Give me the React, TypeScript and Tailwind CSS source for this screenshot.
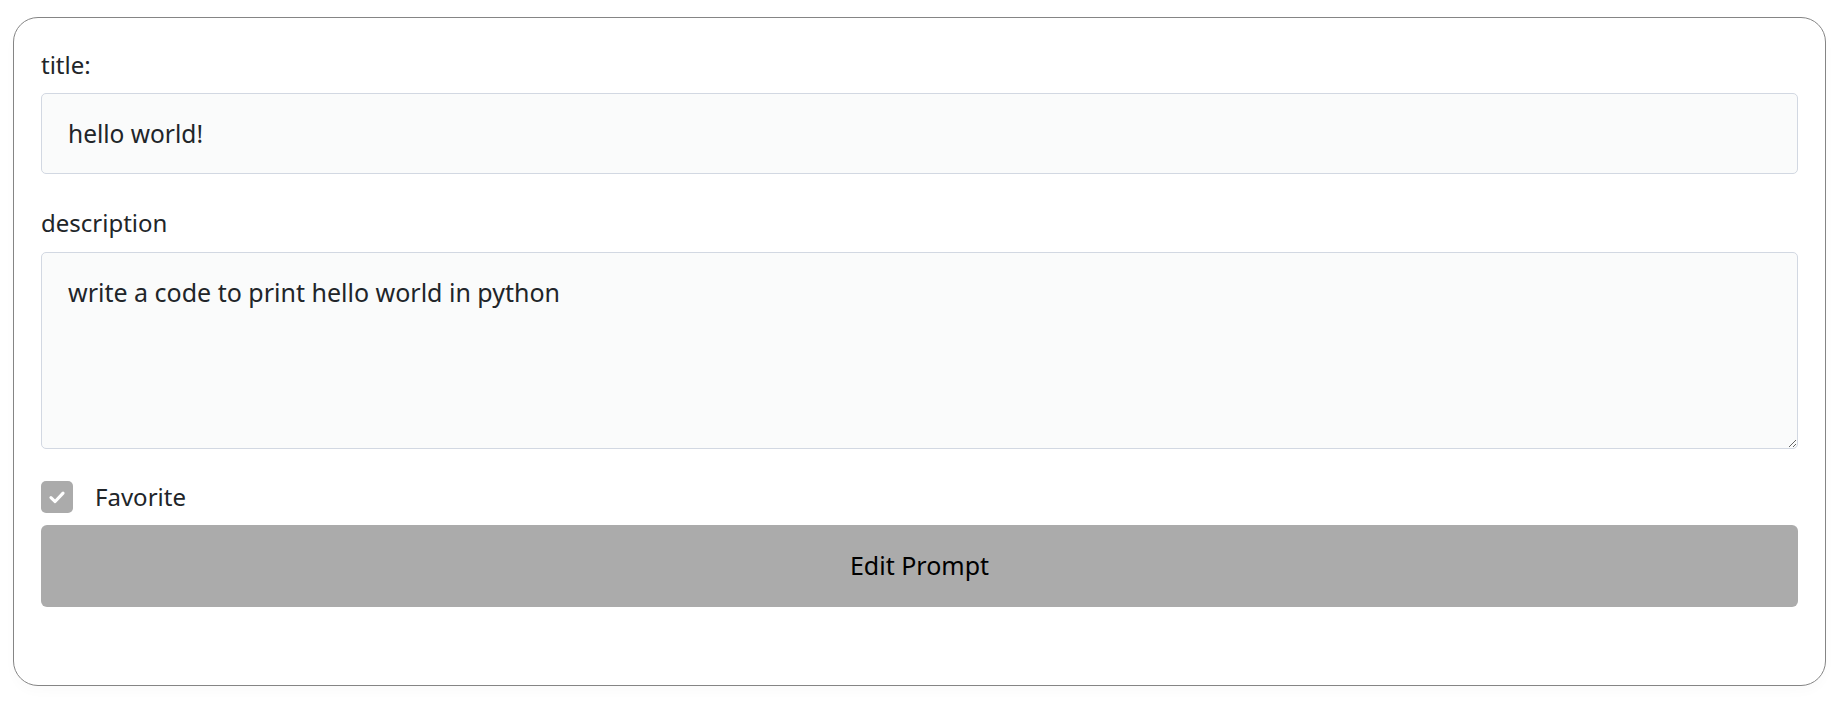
import React from "react";

export default function App() {
  const font = { fontFamily: '"Noto Sans", "Open Sans", sans-serif' };
  return (
    <div className="min-h-[706px] bg-white pl-[13px] pr-[15px] pt-[17px] pb-[20px]" style={font}>
      <div className="rounded-[25px] border border-[#858585] bg-white px-[27px] pt-[30px] pb-[78px] shadow-[0_6px_12px_rgba(0,0,0,0.02)]">
        <label className="block text-[24px] leading-[33px] text-[#212529]">title:</label>
        <div className="mt-[12px] flex h-[81px] items-center rounded-[5px] border border-[#d2d8e2] bg-[#fafbfb] pl-[26px] pt-[2px] text-[24.5px] text-[#212529]">
          hello world!
        </div>
        <label className="mt-[32px] block text-[24px] leading-[33px] text-[#212529]">description</label>
        <textarea
          className="mt-[13px] block h-[197px] w-full rounded-[5px] border border-[#d2d8e2] bg-[#fafbfb] px-[26px] pt-[22px] text-[25px] leading-[34px] text-[#212529] outline-none"
          defaultValue="write a code to print hello world in python"
        />
        <div className="mt-[32px] flex items-center">
          <div className="flex h-[32px] w-[32px] items-center justify-center rounded-[5px] bg-[#ababab]">
            <svg width="22" height="22" viewBox="0 0 20 20" fill="none">
              <path d="M4.5 10.5l3.8 3.6L15.5 6.5" stroke="white" strokeWidth="2.8" strokeLinecap="round" strokeLinejoin="round" />
            </svg>
          </div>
          <span className="ml-[22px] text-[24px] leading-[32px] text-[#212529]">Favorite</span>
        </div>
        <button className="mt-[12px] flex h-[82px] w-full items-center justify-center rounded-[6px] bg-[#ababab] text-[25px] text-black">
          Edit Prompt
        </button>
      </div>
    </div>
  );
}
